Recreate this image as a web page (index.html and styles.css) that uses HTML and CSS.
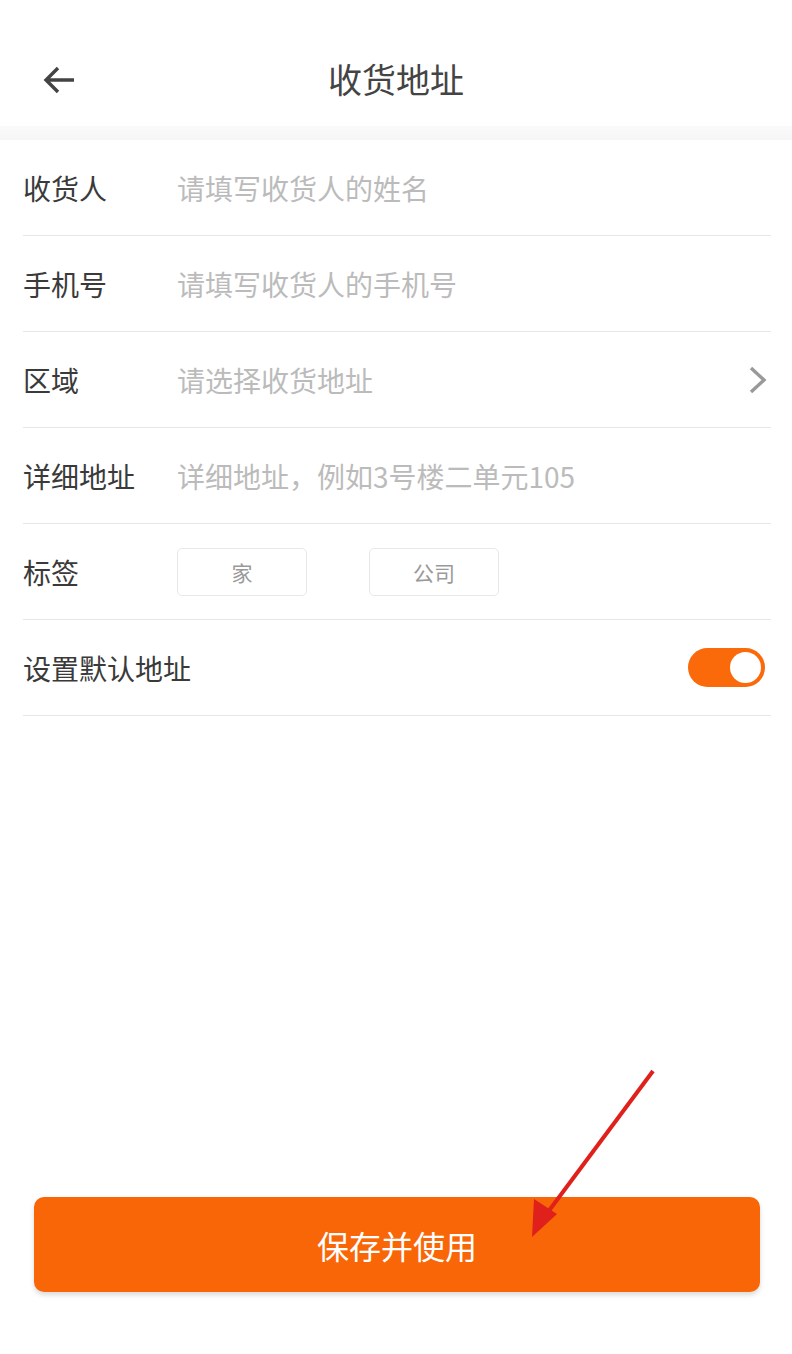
FILE: index.html
```html
<!DOCTYPE html>
<html lang="zh-CN">
<head>
  <meta charset="UTF-8">
  <meta name="viewport" content="width=device-width, initial-scale=1.0">
  <title>收货地址</title>
  <link rel="stylesheet" href="styles.css">
</head>
<body>
  <header class="topbar">
    <span class="back">
      <svg width="34" height="30" viewBox="0 0 34 30"><path d="M32 15H4M16 3L4 15l12 12" fill="none" stroke="#444" stroke-width="3.4"/></svg>
    </span>
    <h1>收货地址</h1>
  </header>
  <div class="band"></div>

  <form class="form">
    <div class="row">
      <span class="label">收货人</span>
      <span class="hint">请填写收货人的姓名</span>
    </div>
    <div class="row">
      <span class="label">手机号</span>
      <span class="hint">请填写收货人的手机号</span>
    </div>
    <div class="row">
      <span class="label">区域</span>
      <span class="hint">请选择收货地址</span>
      <svg class="chevron" width="20" height="30" viewBox="0 0 20 30"><path d="M3 3l13 12L3 27" fill="none" stroke="#999" stroke-width="3.4"/></svg>
    </div>
    <div class="row">
      <span class="label">详细地址</span>
      <span class="hint">详细地址，例如3号楼二单元105</span>
    </div>
    <div class="row">
      <span class="label">标签</span>
      <div class="tags">
        <span class="tag">家</span>
        <span class="tag">公司</span>
      </div>
    </div>
    <div class="row">
      <span class="label">设置默认地址</span>
      <span class="switch"><span class="knob"></span></span>
    </div>
  </form>

  <div class="footer">
    <button type="button" class="save">保存并使用</button>
  </div>

  <svg class="arrow" width="792" height="1354" viewBox="0 0 792 1354">
    <line x1="653" y1="1071" x2="548" y2="1212" stroke="#e0201b" stroke-width="4"/>
    <polygon points="532,1237 534,1199 557,1214" fill="#e0201b"/>
  </svg>
</body>
</html>
```

FILE: styles.css
```css
body {
  margin: 0;
  width: 792px;
  height: 1354px;
  background: #fff;
  font-family: "Noto Sans CJK SC", "Noto Sans", sans-serif;
  position: relative;
  display: flex;
  flex-direction: column;
}
.topbar {
  height: 126px;
  display: flex;
  align-items: center;
  justify-content: center;
  position: relative;
  box-sizing: border-box;
}
.topbar h1 {
  margin: 0;
  font-size: 34px;
  font-weight: 400;
  color: #444;
  margin-top: 30px;
}
.back {
  position: absolute;
  left: 42px;
  top: 65px;
  display: flex;
}
.band {
  height: 14px;
  background: linear-gradient(#fafafa, #f6f6f6);
}
.form {
  padding: 0 21px 0 23px;
}
.row {
  height: 95px;
  border-bottom: 1px solid #e6e6e6;
  display: flex;
  align-items: center;
}
.label {
  width: 154px;
  font-size: 28px;
  color: #3a3a3a;
}
.hint {
  flex: 1;
  font-size: 28px;
  color: #bbb;
}
.chevron {
  margin-right: 3px;
}
.tags {
  display: flex;
  gap: 62px;
}
.tag {
  width: 128px;
  height: 46px;
  border: 1px solid #e8e8e8;
  border-radius: 5px;
  display: flex;
  align-items: center;
  justify-content: center;
  font-size: 21px;
  color: #9a9a9a;
}
.row:last-child .label {
  flex: 1;
}
.switch {
  width: 77px;
  height: 39px;
  border-radius: 20px;
  background: #fa6a0a;
  display: flex;
  align-items: center;
  justify-content: flex-end;
  padding-right: 4px;
  box-sizing: border-box;
  margin-right: 6px;
}
.knob {
  width: 31px;
  height: 31px;
  border-radius: 50%;
  background: #fff;
}
.footer {
  margin-top: auto;
  padding: 0 32px 62px 34px;
}
.save {
  width: 100%;
  height: 95px;
  border: none;
  border-radius: 10px;
  background: #f96607;
  color: #fff;
  font-family: inherit;
  font-size: 32px;
  box-shadow: 0 3px 5px rgba(0,0,0,0.15);
}
.arrow {
  position: absolute;
  left: 0;
  top: 0;
  pointer-events: none;
}
```
